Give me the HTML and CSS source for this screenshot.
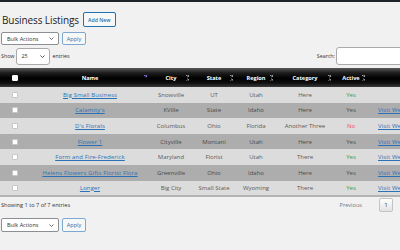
FILE: index.html
```html
<!DOCTYPE html>
<html>
<head>
<meta charset="utf-8">
<link rel="stylesheet" href="styles.css">
</head>
<body>
<div class="adminbar"></div>
<div class="wrap">
  <div class="head">
    <h1>Business Listings</h1>
    <span class="add-new">Add New</span>
  </div>
  <div class="tablenav">
    <div class="wp-select">Bulk Actions<svg class="chev" width="5" height="3" viewBox="0 0 5 3"><path d="M0.5 0.5 L2.5 2.5 L4.5 0.5" fill="none" stroke="#50575e" stroke-width="0.9"/></svg></div>
    <span class="apply">Apply</span>
  </div>
  <div class="dt-top">
    <div class="len">Show <span class="len-select">25<svg class="chev" width="5" height="3" viewBox="0 0 5 3"><path d="M0.5 0.5 L2.5 2.5 L4.5 0.5" fill="none" stroke="#444" stroke-width="0.9"/></svg></span> entries</div>
    <div class="search">Search: <span class="search-input"></span></div>
  </div>
  <table class="listings">
    <colgroup>
      <col class="c-cb"><col class="c-name"><col class="c-city"><col class="c-state"><col class="c-region"><col class="c-cat"><col class="c-active"><col class="c-web">
    </colgroup>
    <thead>
      <tr>
        <th><span class="cb head-cb"></span></th>
        <th class="sort">Name<span class="si asc"></span></th>
        <th class="sort">City<span class="si"></span></th>
        <th class="sort">State<span class="si"></span></th>
        <th class="sort">Region<span class="si"></span></th>
        <th class="sort">Category<span class="si"></span></th>
        <th class="sort">Active<span class="si"></span></th>
        <th></th>
      </tr>
    </thead>
    <tbody>
      <tr class="odd"><td><span class="cb"></span></td><td><a>Big Small Business</a></td><td>Snowville</td><td>UT</td><td>Utah</td><td>Here</td><td class="yes">Yes</td><td></td></tr>
      <tr class="even"><td><span class="cb"></span></td><td><a>Calamity's</a></td><td>KVille</td><td>State</td><td>Idaho</td><td>Here</td><td class="yes">Yes</td><td class="web"><a>Visit We</a></td></tr>
      <tr class="odd"><td><span class="cb"></span></td><td><a>D's Florals</a></td><td>Columbus</td><td>Ohio</td><td>Florida</td><td>Another Three</td><td class="no">No</td><td class="web"><a>Visit We</a></td></tr>
      <tr class="even"><td><span class="cb"></span></td><td><a>Flower 1</a></td><td>Cityville</td><td>Montani</td><td>Utah</td><td>Here</td><td class="yes">Yes</td><td class="web"><a>Visit We</a></td></tr>
      <tr class="odd"><td><span class="cb"></span></td><td><a>Form and Fire-Frederick</a></td><td>Maryland</td><td>Florist</td><td>Utah</td><td>There</td><td class="yes">Yes</td><td class="web"><a>Visit We</a></td></tr>
      <tr class="even"><td><span class="cb"></span></td><td><a>Helens Flowers Gifts Florist Flora</a></td><td>Greenville</td><td>Ohio</td><td>Idaho</td><td>Here</td><td class="yes">Yes</td><td class="web"><a>Visit We</a></td></tr>
      <tr class="odd"><td><span class="cb"></span></td><td><a>Longer</a></td><td>Big City</td><td>Small State</td><td>Wyoming</td><td>There</td><td class="yes">Yes</td><td class="web"><a>Visit We</a></td></tr>
    </tbody>
  </table>
  <div class="dt-bottom">
    <div class="info">Showing 1 to 7 of 7 entries</div>
    <div class="paginate"><span class="prev">Previous</span><span class="page">1</span></div>
  </div>
  <div class="tablenav bottom">
    <div class="wp-select">Bulk Actions<svg class="chev" width="5" height="3" viewBox="0 0 5 3"><path d="M0.5 0.5 L2.5 2.5 L4.5 0.5" fill="none" stroke="#50575e" stroke-width="0.9"/></svg></div>
    <span class="apply">Apply</span>
  </div>
</div>
</body>
</html>
```

FILE: styles.css
```css
html, body {
  margin: 0;
  width: 400px;
  height: 250px;
  overflow: hidden;
  background: #f1f1f1;
  font-family: "Open Sans", "Noto Sans", sans-serif;
  color: #3c434a;
}

.adminbar {
  height: 2px;
  background: #1d2327;
}

.wrap {
  padding-left: 1px;
  width: 399px;
}

.head {
  display: flex;
  align-items: center;
  height: 15px;
  margin-top: 10px;
}

.head h1 {
  margin: 0 0 0 1px;
  font-size: 10px;
  font-weight: 400;
  color: #1d2327;
  letter-spacing: -0.1px;
}

.add-new {
  margin-left: 4px;
  height: 13px;
  padding: 0 4px;
  display: flex;
  align-items: center;
  border: 1px solid #2271b1;
  border-radius: 2px;
  background: #f6f7f7;
  color: #2271b1;
  font-size: 5.2px;
  font-weight: 600;
}

.tablenav {
  display: flex;
  align-items: center;
  margin-top: 5px;
  height: 13px;
}

.tablenav.bottom {
  margin-top: 6px;
  height: 14px;
}

.wp-select {
  box-sizing: border-box;
  width: 58px;
  height: 100%;
  border: 1px solid #8c8f94;
  border-radius: 2px;
  background: #fff;
  display: flex;
  align-items: center;
  padding-left: 5px;
  font-size: 5.5px;
  color: #2c3338;
  position: relative;
}

.wp-select .chev {
  margin-left: auto;
  margin-right: 4px;
}

.apply {
  box-sizing: border-box;
  margin-left: 3px;
  width: 24px;
  height: 100%;
  border: 1px solid #7fa8d0;
  border-radius: 2px;
  background: #f6f7f7;
  color: #2271b1;
  font-size: 5.5px;
  display: flex;
  align-items: center;
  justify-content: center;
}

.dt-top {
  display: flex;
  align-items: center;
  margin-top: 2px;
  height: 18px;
  font-size: 5.3px;
  color: #333;
}

.len {
  display: flex;
  align-items: center;
}

.len-select {
  box-sizing: border-box;
  margin: 0 2px 0 2px;
  width: 34px;
  height: 17px;
  border: 1px solid #aaa;
  border-radius: 3px;
  background: #fff;
  display: flex;
  align-items: center;
  padding-left: 4px;
  font-size: 5.5px;
}

.len-select .chev {
  margin-left: auto;
  margin-right: 4px;
}

.search {
  margin-left: auto;
  margin-right: -6px;
  display: flex;
  align-items: center;
}

.search-input {
  box-sizing: border-box;
  margin-left: 1px;
  width: 70px;
  height: 18px;
  border: 1px solid #aaa;
  border-radius: 3px;
  background: #fff;
}

.listings {
  margin-top: 3px;
  margin-left: -1px;
  width: 440px;
  table-layout: fixed;
  border-collapse: collapse;
  border-bottom: 2px solid #b4b4b4;
  font-size: 6px;
}

.c-cb { width: 30px; }
.c-name { width: 120px; }
.c-city { width: 42px; }
.c-state { width: 44px; }
.c-region { width: 40px; }
.c-cat { width: 58px; }
.c-active { width: 34px; }
.c-web { width: 72px; }

.listings thead tr {
  height: 19px;
  background: linear-gradient(to bottom, #5a5a5a 0%, #1e1e1e 25%, #000 55%, #111 80%, #3a3a3a 100%);
}

.listings th {
  padding: 0;
  color: #fff;
  font-size: 5.6px;
  font-weight: 700;
  text-align: center;
  position: relative;
}

.listings th .si {
  position: absolute;
  right: 3px;
  top: 50%;
  margin-top: -3px;
  width: 3px;
  height: 6px;
  background:
    linear-gradient(to top right, transparent 50%, #9a9a9a 50%) 0 0 / 1.5px 2.5px no-repeat,
    linear-gradient(to top left, transparent 50%, #9a9a9a 50%) 1.5px 0 / 1.5px 2.5px no-repeat,
    linear-gradient(to bottom right, transparent 50%, #9a9a9a 50%) 0 3.5px / 1.5px 2.5px no-repeat,
    linear-gradient(to bottom left, transparent 50%, #9a9a9a 50%) 1.5px 3.5px / 1.5px 2.5px no-repeat;
}

.listings th .si.asc {
  right: 3px;
  background:
    linear-gradient(to top right, transparent 50%, #7b78d8 50%) 0 0 / 1.5px 2.5px no-repeat,
    linear-gradient(to top left, transparent 50%, #7b78d8 50%) 1.5px 0 / 1.5px 2.5px no-repeat;
}

.cb {
  display: block;
  box-sizing: border-box;
  margin-left: 12px;
  width: 6px;
  height: 6px;
  background: #fff;
  border: 1px solid #c7c7c7;
  border-radius: 1px;
}

.head-cb {
  border-color: #fff;
}

.listings tbody tr {
  height: 15.6px;
}

.listings tbody tr.odd {
  background: #dcdcdc;
}

.listings tbody tr.even {
  background: #adadad;
}

.listings td {
  padding: 0;
  text-align: center;
  color: #5a5a5a;
  white-space: nowrap;
  overflow: hidden;
}

.listings td.web {
  text-align: left;
  padding-left: 10px;
}

.listings tr.even td {
  color: #4a4a4a;
}

.listings td a {
  color: #2a72b8;
  font-weight: 500;
  letter-spacing: 0.12px;
  text-decoration: underline;
}

.listings td.yes {
  color: #3c9a3c;
}

.listings td.no {
  color: #ee5555;
}

.dt-bottom {
  display: flex;
  align-items: center;
  height: 15px;
  font-size: 5.6px;
  color: #333;
}

.paginate {
  margin-left: auto;
  margin-right: 7px;
  display: flex;
  align-items: center;
}

.prev {
  color: #777;
  margin-right: 17px;
}

.page {
  box-sizing: border-box;
  width: 14px;
  height: 14px;
  border: 1px solid #c4c4c4;
  border-radius: 2px;
  background: linear-gradient(to bottom, #fff 0%, #e2e2e2 100%);
  display: flex;
  align-items: center;
  justify-content: center;
  color: #333;
}
```
